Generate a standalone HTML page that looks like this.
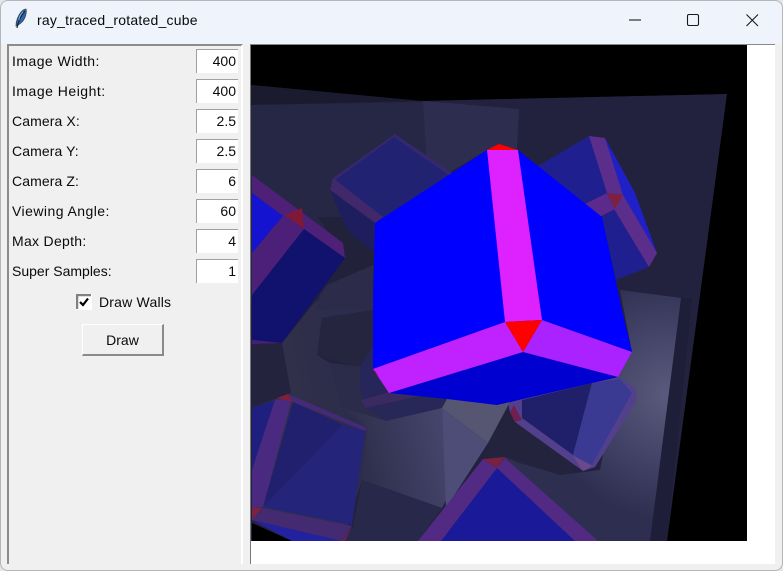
<!DOCTYPE html>
<html><head><meta charset="utf-8">
<style>
html,body{margin:0;padding:0;width:783px;height:571px;overflow:hidden;background:#e4e6ea}
*{box-sizing:border-box}
#win{position:absolute;left:0;top:0;width:783px;height:571px;background:#f0f0f0;border:1px solid #b4b6ba;border-radius:8px;overflow:hidden}
#tb{position:absolute;left:0;top:0;width:783px;height:43px;background:#eff3fb}
.t{position:absolute;font-family:"Liberation Sans",sans-serif;font-size:14px;color:#0a0a0a;white-space:nowrap;line-height:18px}
#panel{position:absolute;left:7px;top:44px;width:236px;height:520px;border-left:2px solid #8c8c8c;border-top:2px solid #8c8c8c;border-right:2px solid #fff;background:#f0f0f0}
.e{position:absolute;left:196px;width:42px;height:24px;background:#fff;border-left:1.5px solid #a0a0a0;border-top:1.5px solid #a0a0a0;font-family:"Liberation Sans",sans-serif;font-size:14px;color:#0a0a0a;text-align:right;line-height:22px;padding-right:2px}
#btn{position:absolute;left:82px;top:324px;width:82px;height:32px;background:#f0f0f0;border-left:1.5px solid #fff;border-top:1.5px solid #fff;border-right:2px solid #8a8a8a;border-bottom:2px solid #8a8a8a;text-align:center;font-family:"Liberation Sans",sans-serif;font-size:14px;line-height:31px;color:#0a0a0a}
#cv{position:absolute;left:250px;top:44px;width:525px;height:520px;background:#fff;border-left:1px solid #777;border-top:1px solid #888}
svg{position:absolute;display:block}
</style></head><body>
<div id="win"></div>
<div id="tb" style="left:1px;top:1px;width:781px;border-radius:8px 8px 0 0;position:absolute"></div>
<svg style="left:12px;top:6px" width="20" height="26" viewBox="0 0 20 26"><path d="M4 20 C4 15 6 10 9 6 C11 4 13 3 14 3 C15 7 13 13 10 16 C8 18 6 19 5 20 Z" fill="#2a66ac" stroke="#3a4450" stroke-width=".8"/><path d="M5 22 C6 16 8 11 13 5" stroke="#1c2430" stroke-width="1.1" fill="none"/><path d="M7 14 C7 11 9 8 11 6" stroke="#8fb8e0" stroke-width=".8" fill="none"/></svg>
<div class="t" style="left:37px;top:11px;letter-spacing:.22px">ray_traced_rotated_cube</div>
<svg style="left:620px;top:10px" width="150" height="22" viewBox="0 0 150 22" fill="none" stroke="#1a1a1a" stroke-width="1.1"><path d="M9 10H21"/><rect x="67.5" y="4.5" width="11" height="11" rx="1.5"/><path d="M126.5 4.5L138 16M138 4.5L126.5 16"/></svg>
<div id="panel"></div>
<div class="t" style="left:12px;top:52px;letter-spacing:.45px">Image Width:</div>
<div class="t" style="left:12px;top:82px;letter-spacing:.5px">Image Height:</div>
<div class="t" style="left:12px;top:112px;letter-spacing:.1px">Camera X:</div>
<div class="t" style="left:12px;top:142px;letter-spacing:.1px">Camera Y:</div>
<div class="t" style="left:12px;top:172px;letter-spacing:.1px">Camera Z:</div>
<div class="t" style="left:12px;top:202px;letter-spacing:.45px">Viewing Angle:</div>
<div class="t" style="left:12px;top:232px;letter-spacing:.3px">Max Depth:</div>
<div class="t" style="left:12px;top:262px;letter-spacing:0">Super Samples:</div>
<div class="e" style="top:49px">400</div>
<div class="e" style="top:79px">400</div>
<div class="e" style="top:109px">2.5</div>
<div class="e" style="top:139px">2.5</div>
<div class="e" style="top:169px">6</div>
<div class="e" style="top:199px">60</div>
<div class="e" style="top:229px">4</div>
<div class="e" style="top:259px">1</div>
<svg style="left:76px;top:294px" width="16" height="16" viewBox="0 0 16 16"><rect width="16" height="16" fill="#fff"/><path d="M1 15V1H15" stroke="#808080" stroke-width="2.5" fill="none"/><path d="M4 8L7 11L12 4.500" stroke="#000" stroke-width="2.2" fill="none"/></svg>
<div class="t" style="left:99px;top:293px;letter-spacing:.2px">Draw Walls</div>
<div id="btn">Draw</div>
<div id="cv"></div>
<svg style="left:0;top:0;filter:blur(.35px)" width="783" height="571" viewBox="0 0 783 571">
<defs>
<clipPath id="c"><rect x="251" y="45" width="496" height="496"/></clipPath>
<linearGradient id="g1" x1="367" y1="460" x2="445" y2="440" gradientUnits="userSpaceOnUse"><stop offset="0" stop-color="#30304e"/><stop offset="1" stop-color="#45456c"/></linearGradient>
<radialGradient id="g2" cx="668" cy="395" r="125" gradientUnits="userSpaceOnUse"><stop offset="0" stop-color="#5a5a7c"/><stop offset=".5" stop-color="#444468"/><stop offset="1" stop-color="#2e2e50"/></radialGradient>
<linearGradient id="g3" x1="291" y1="380" x2="345" y2="370" gradientUnits="userSpaceOnUse"><stop offset="0" stop-color="#30304a"/><stop offset="1" stop-color="#2c2c4c"/></linearGradient>
</defs>
<g clip-path="url(#c)">
<rect x="251" y="45" width="497" height="497" fill="#000"/>
<polygon points="251,85 420,101 550,98 727,94 667,541 251,541" fill="#22223e"/>
<polygon points="251,85 423,101 251,105" fill="#1b1b30"/>
<polygon points="251,105 423,102 429,190 380,270 251,300" fill="#262645"/>
<polygon points="423,101 519,109 517,150 487,150 428,185" fill="#2d2d50"/>
<!-- wall edge -->
<polygon points="681,298 692,298 667,541 650,541" fill="#1e1e38"/>
<!-- shadow under ghost -->
<polygon points="318,217 347,217 375,253 375,265 327,285 308,310 280,345 345,258" fill="#21213a"/>
<!-- ghost cube -->
<polygon points="395,134 452,173 375,223 333,178" fill="#222272"/>
<polygon points="395,134 452,173 450,176 394,137 335,180 333,178" fill="#36286c"/>
<polygon points="333,178 383,217 375,223 330,190" fill="#40286a"/>
<polygon points="330,190 375,223 375,253 347,230" fill="#1e1e5e"/>
<!-- left cube -->
<polygon points="252,175 343,243 345,258 304,229 283,216 252,193" fill="#4f2078"/>
<polygon points="252,193 283,216 252,253" fill="#1414d0"/>
<polygon points="283,216 304,229 252,295 252,253" fill="#4c2078"/>
<polygon points="285,215 302,208 304,229" fill="#801838"/>
<polygon points="304,229 345,258 282,343 252,340 252,295" fill="#11116e"/>
<polygon points="252,340 282,343 262,346 252,344" fill="#45207a"/>
<!-- lower left gray areas -->
<polygon points="252,344 282,343 291,393 252,408" fill="#23233e"/>
<polygon points="282,343 315,302 373,265 373,310 322,318 317,355 330,363 342,407 367,428 362,480 342,541 292,541 252,520 252,408 291,393" fill="url(#g3)"/>
<polygon points="316,310 320,295 327,285 373,265 373,310" fill="#2c2c4a"/>
<polygon points="322,318 373,310 373,368 360,368 317,355" fill="#25253f"/>
<polygon points="330,363 373,368 390,393 447,399 442,408 386,421 342,407" fill="#2b2b4a"/>
<polygon points="360,368 373,345 373,369 390,393 365,405 360,390" fill="#26265a"/>
<polygon points="361,400 390,392 420,396 365,408" fill="#3b2a60"/>
<polygon points="365,408 420,396 447,399 440,408 386,421" fill="#282858"/>
<!-- floor -->
<polygon points="342,407 386,421 442,408 446,500 442,508 362,480 367,428" fill="url(#g1)"/>
<polygon points="442,408 488,443 446,508" fill="#4d4d78"/>
<polygon points="442,408 447,399 510,402 488,443" fill="#565672"/>
<polygon points="362,480 442,508 418,541 342,541 353,527" fill="#28284a"/>
<!-- right lit floor -->
<polygon points="618,377 632,352 620,290 681,298 650,541 575,541 510,480 497,468 505,457 520,440 560,475 600,470" fill="url(#g2)"/>
<!-- dark region -->
<polygon points="488,443 508,413 522,420 572,454 572,472 560,475 520,463 505,457 483,459" fill="#23233e"/>
<!-- right reflection cube -->
<polygon points="618,377 635,388 637,400 595,467 583,471 515,422 510,412 508,403 523,398" fill="#52408c"/>
<polygon points="522,400 592,383 573,455 522,418" fill="#20206a"/>
<polygon points="592,383 620,379 632,393 592,465 573,455" fill="#3a3a92"/>
<polygon points="510,412 515,422 522,420 514,405" fill="#702050"/>
<polygon points="573,456 592,466 583,471" fill="#6a4a8c"/>
<!-- right-top cube -->
<polygon points="538,166 589,136 607,193 585,204" fill="#1f1f90"/>
<polygon points="605,138 635,193 657,253 623,195" fill="#2020c8"/>
<polygon points="589,136 605,138 623,195 607,193" fill="#5c2e8c"/>
<polygon points="602,217 614,209 649,267 616,280" fill="#1f1f90"/>
<polygon points="623,195 657,253 649,267 614,209" fill="#5c2e8c"/>
<polygon points="585,204 607,193 615,209 600,217" fill="#5a2a8c"/>
<polygon points="607,193 623,195 615,209" fill="#802040"/>
<!-- bottom-left cube -->
<polygon points="252,408 275,400 252,470" fill="#1f1f80"/>
<polygon points="275,400 292,398 263,507 252,507 252,470" fill="#4a2a80"/>
<polygon points="277,398 288,394 293,402" fill="#802038"/>
<polygon points="288,394 367,428 365,431 293,402" fill="#452a78"/>
<polygon points="293,402 343,425 263,507" fill="#20206f"/>
<polygon points="343,425 365,431 352,525 263,507" fill="#24247a"/>
<polygon points="252,520 263,508 352,526 342,541" fill="#442a70"/>
<polygon points="252,507 262,508 252,520" fill="#7a2244"/>
<polygon points="352,527 342,541 345,541" fill="#702050"/>
<polygon points="252,523 292,541 252,541" fill="#000"/>
<polygon points="252,520 342,541 292,541" fill="#2222a0"/>
<!-- bottom center cube -->
<polygon points="497,468 575,541 441,541" fill="#1a1a98"/>
<polygon points="483,459 497,468 441,541 418,541" fill="#522a84"/>
<polygon points="505,458 598,541 575,541 497,468" fill="#522a84"/>
<polygon points="483,459 505,457 497,468" fill="#7a2040"/>
<!-- main cube -->
<polygon points="375,223 487,150 518,150 602,217 622,310 632,352 542,320 505,322 373,369 373,300" fill="#0000ff"/>
<polygon points="389,393 523,352 618,377 510,402 497,405 447,399" fill="#0000d0"/>
<polygon points="487,150 518,150 542,320 505,322" fill="#dd22ff"/>
<polygon points="487,150 499,144 518,150" fill="#ff0000"/>
<polygon points="373,369 505,322 523,352 389,393" fill="#c022ff"/>
<polygon points="373,369 376,372 380,380" fill="#a01060"/>
<polygon points="542,320 632,352 618,377 523,352" fill="#aa22ff"/>
<polygon points="505,322 542,320 523,352" fill="#ff0000"/>
</g>
</svg>
</body></html>
